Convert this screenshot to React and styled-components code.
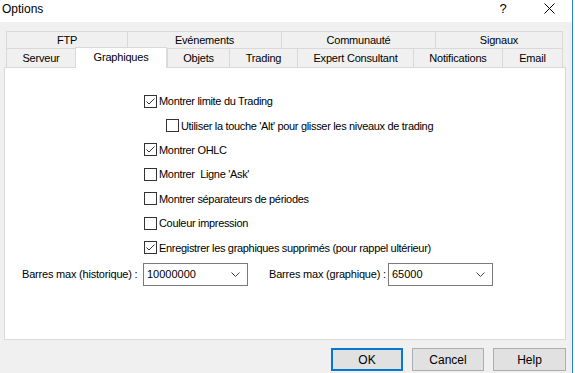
import React from 'react'
import styled, { createGlobalStyle } from 'styled-components'

const GlobalStyle = createGlobalStyle`
  html, body {
    margin: 0;
    padding: 0;
    background: #ffffff;
  }
  body {
    font-family: "Liberation Sans", Arial, sans-serif;
    font-size: 11px;
    color: #000;
  }
`

const topTabs = [
    { label: 'FTP', width: 121 },
    { label: 'Evénements', width: 154 },
    { label: 'Communauté', width: 154 },
    { label: 'Signaux', width: 128 },
]

const bottomTabs = [
    { label: 'Serveur', width: 69 },
    { label: 'Graphiques', width: 92, active: true },
    { label: 'Objets', width: 62 },
    { label: 'Trading', width: 68 },
    { label: 'Expert Consultant', width: 116 },
    { label: 'Notifications', width: 89 },
    { label: 'Email', width: 61, last: true },
]

const options = [
    { label: 'Montrer limite du Trading', checked: true },
    { label: "Utiliser la touche 'Alt' pour glisser les niveaux de trading", indent: true },
    { label: 'Montrer OHLC', checked: true },
    { label: "Montrer  Ligne 'Ask'" },
    { label: 'Montrer séparateurs de périodes' },
    { label: 'Couleur impression' },
    { label: 'Enregistrer les graphiques supprimés (pour rappel ultérieur)', checked: true },
]

const Check = () => (
    <svg width="11" height="11" viewBox="0 0 11 11">
        <polyline points="1.5,5.5 4,8 9.5,2.5" fill="none" stroke="#333" strokeWidth="1" />
    </svg>
)

const Chevron = () => (
    <svg width="9" height="5" viewBox="0 0 9 5">
        <polyline points="0.5,0.5 4.5,4.5 8.5,0.5" fill="none" stroke="#444" strokeWidth="1" />
    </svg>
)

const CloseIcon = () => (
    <svg width="11" height="11" viewBox="0 0 11 11">
        <path d="M0.5 0.5 L10.5 10.5 M10.5 0.5 L0.5 10.5" stroke="#000" strokeWidth="1" />
    </svg>
)

const Combo = ({ value }) => (
    <ComboBox>
        <ComboValue>{value}</ComboValue>
        <Chevron />
    </ComboBox>
)

const App = () => {
    return (
        <Window>
            <GlobalStyle />
            <TitleBar>
                <Title>Options</Title>
                <CaptionButton>?</CaptionButton>
                <CaptionButton><CloseIcon /></CaptionButton>
            </TitleBar>
            <Body>
                <TabRow>
                    {topTabs.map(t => (
                        <Tab key={t.label} width={t.width} last={t.label === 'Signaux'}>{t.label}</Tab>
                    ))}
                </TabRow>
                <TabRow tall>
                    {bottomTabs.map(t => t.active ? (
                        <ActiveTab key={t.label} width={t.width}>{t.label}</ActiveTab>
                    ) : (
                        <Tab key={t.label} width={t.width} last={t.last}>{t.label}</Tab>
                    ))}
                </TabRow>
                <Panel>
                    <CheckList>
                        {options.map(o => (
                            <CheckRow key={o.label} indent={o.indent}>
                                <Box>{o.checked && <Check />}</Box>
                                <CheckLabel>{o.label}</CheckLabel>
                            </CheckRow>
                        ))}
                    </CheckList>
                    <ComboRow>
                        <FieldLabel width={121}>Barres max (historique) :</FieldLabel>
                        <Combo value="10000000" />
                        <Spacer />
                        <FieldLabel width={119}>Barres max (graphique) :</FieldLabel>
                        <Combo value="65000" />
                    </ComboRow>
                </Panel>
                <ButtonBar>
                    <Button primary>OK</Button>
                    <Button>Cancel</Button>
                    <Button wide>Help</Button>
                </ButtonBar>
            </Body>
        </Window>
    )
}

export default App


const Window = styled.div`
    width: 572px;
    height: 373px;
    border-right: 1px solid #2a7fd4;
    background: #f0f0f0;
    overflow: hidden;
    display: flex;
    flex-direction: column;
`

const TitleBar = styled.div`
    height: 22px;
    background: #ffffff;
    display: flex;
    align-items: center;
    padding-left: 2px;
`

const Title = styled.div`
    flex: 1;
    font-size: 12px;
    padding-bottom: 5px;
`

const CaptionButton = styled.div`
    width: 46px;
    height: 22px;
    display: flex;
    align-items: center;
    justify-content: center;
    font-size: 13px;
    padding-bottom: 6px;
    box-sizing: border-box;
`

const Body = styled.div`
    flex: 1;
    padding: 9px 0 0 4px;
    display: flex;
    flex-direction: column;
`

const TabRow = styled.div`
    display: flex;
    height: ${p => p.tall ? 19 : 17}px;
    margin-left: 2px;
`

const Tab = styled.div`
    width: ${p => p.width}px;
    box-sizing: border-box;
    border-top: 1px solid #d9d9d9;
    border-left: 1px solid #d9d9d9;
    border-right: ${p => p.last ? '1px solid #d9d9d9' : 'none'};
    display: flex;
    align-items: center;
    justify-content: center;
    letter-spacing: -0.2px;
    white-space: nowrap;
`

const ActiveTab = styled(Tab)`
    position: relative;
    z-index: 1;
    background: #ffffff;
    border-right: 1px solid #d9d9d9;
    margin-top: -1px;
    height: 21px;
    flex-shrink: 0;
    align-items: flex-start;
    padding-top: 3px;
`

const Panel = styled.div`
    width: 562px;
    height: 273px;
    box-sizing: border-box;
    background: #ffffff;
    border: 1px solid #d9d9d9;
    padding: 21px 0 0 139px;
`

const CheckList = styled.div`
    display: flex;
    flex-direction: column;
`

const CheckRow = styled.div`
    height: 24.4px;
    display: flex;
    align-items: center;
    padding-left: ${p => p.indent ? 22 : 0}px;
`

const Box = styled.div`
    width: 13px;
    height: 13px;
    box-sizing: border-box;
    border: 1px solid #333333;
    background: #ffffff;
    display: flex;
    align-items: center;
    justify-content: center;
    margin-right: 2px;
`

const CheckLabel = styled.span`
    letter-spacing: -0.32px;
    white-space: pre;
`

const ComboRow = styled.div`
    display: flex;
    align-items: center;
    margin: 3px 0 0 -122px;
`

const FieldLabel = styled.div`
    width: ${p => p.width}px;
    letter-spacing: -0.2px;
    white-space: nowrap;
`

const Spacer = styled.div`
    width: 21px;
`

const ComboBox = styled.div`
    width: 105px;
    height: 23px;
    box-sizing: border-box;
    border: 1px solid #7a7a7a;
    display: flex;
    align-items: center;
    padding: 0 7px 0 3px;
`

const ComboValue = styled.div`
    flex: 1;
`

const ButtonBar = styled.div`
    display: flex;
    justify-content: flex-end;
    gap: 9px;
    padding: 8px 6px 0 0;
`

const Button = styled.div`
    width: ${p => p.wide ? 73 : 72}px;
    height: 23px;
    box-sizing: border-box;
    background: #e1e1e1;
    border: ${p => p.primary ? '2px solid #0078d7' : '1px solid #adadad'};
    display: flex;
    align-items: center;
    justify-content: center;
    font-size: 12px;
`
